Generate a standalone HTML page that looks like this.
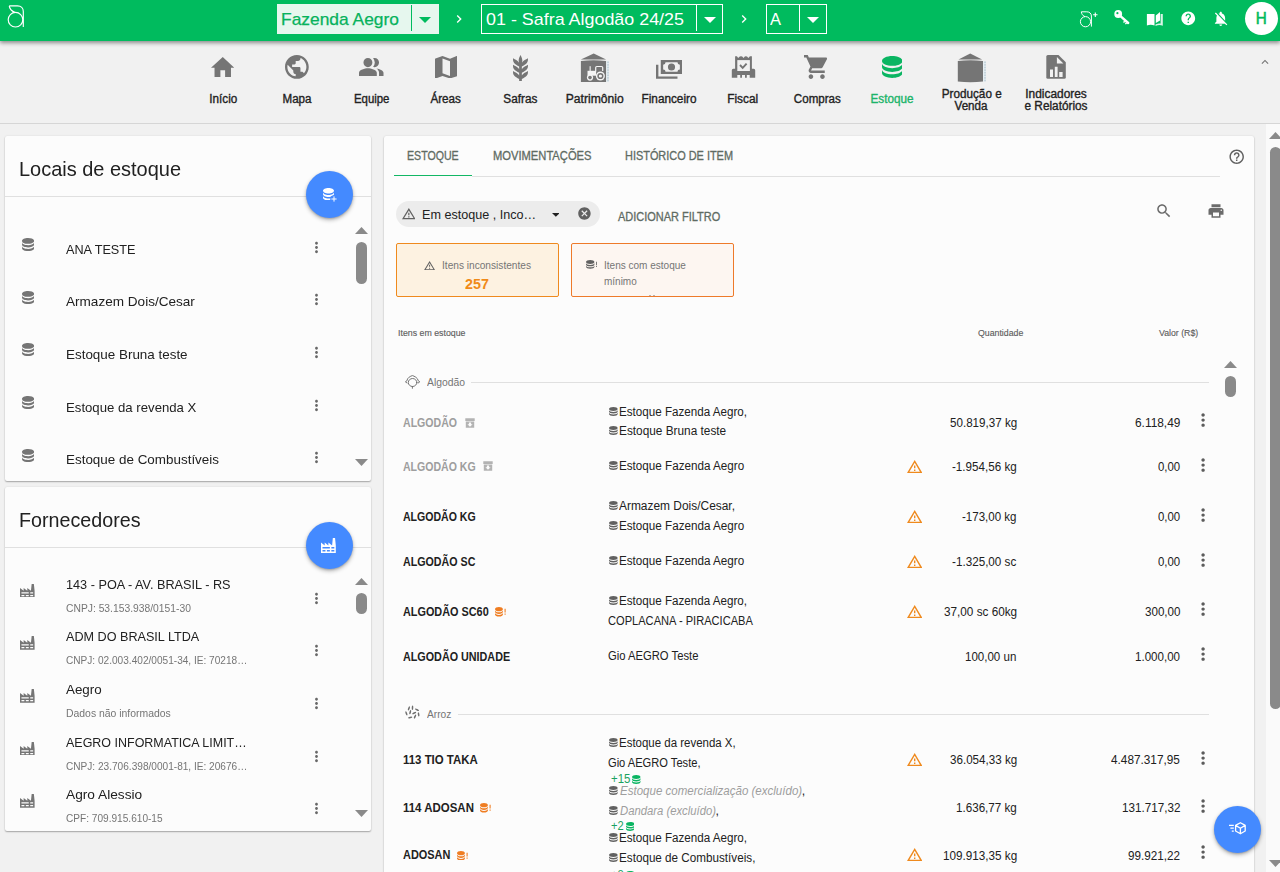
<!DOCTYPE html>
<html lang="pt-BR"><head><meta charset="utf-8"><title>Estoque - Aegro</title>
<style>
html,body{margin:0;padding:0;}
body{width:1280px;height:872px;overflow:hidden;position:relative;background:#f1f1f1;font-family:"Liberation Sans",sans-serif;}
.t{position:absolute;white-space:pre;}
</style></head><body>
<div style="position:absolute;left:0px;top:41px;width:1280px;height:82px;background:#f1f1f1;"></div>
<div style="position:absolute;left:0px;top:123px;width:1280px;height:1px;background:#d6d6d6;"></div>
<div style="position:absolute;left:0px;top:0px;width:1280px;height:41px;background:#00bb5e;box-shadow:0 1.500px 4px rgba(0,0,0,.42);"></div>
<svg style="position:absolute;left:0px;top:0px;" width="32" height="32" viewBox="0 0 32 32"><g fill="none" stroke="#fff" stroke-width="1.150"><circle cx="15.500" cy="19.700" r="7.300"/><path d="M9.300 5.900H17.500C21 5.900 23.300 8.300 23.300 11.500V27"/><path d="M9.300 5.900C9.500 9 11.500 11 14.800 12.300"/></g></svg>
<div style="position:absolute;left:277px;top:4px;width:162px;height:30px;background:#e6f7ee;"></div>
<div class="t" style="left:281.00px;top:10.34px;font-size:17px;line-height:19.533px;color:#06b25c;transform:scaleX(1.0233);transform-origin:0 0;-webkit-text-stroke:0.25px #06b25c;">Fazenda Aegro</div>
<div style="position:absolute;left:411px;top:5px;width:1px;height:26px;background:#00bb5e;"></div>
<svg style="position:absolute;left:418.5px;top:16.5px" width="12.0" height="6.0" viewBox="7 10 10 5" preserveAspectRatio="none"><path fill="#00bb5e" d="M7 10l5 5 5-5z"/></svg>
<svg style="position:absolute;left:451.0px;top:10.6px;" width="16" height="16" viewBox="0 0 24 24"><path fill="#fff" d="M10 6L8.590 7.410 13.170 12l-4.580 4.590L10 18l6-6z"/></svg>
<div style="position:absolute;left:481px;top:4px;width:242px;height:30px;border:1px solid #fff;box-sizing:border-box;"></div>
<div class="t" style="left:486.00px;top:10.34px;font-size:17px;line-height:19.533px;color:#fff;transform:scaleX(1.0527);transform-origin:0 0;">01 - Safra Algodão 24/25</div>
<div style="position:absolute;left:696px;top:5px;width:1px;height:26px;background:#fff;"></div>
<svg style="position:absolute;left:703.5px;top:16.5px" width="12.0" height="6.0" viewBox="7 10 10 5" preserveAspectRatio="none"><path fill="#fff" d="M7 10l5 5 5-5z"/></svg>
<svg style="position:absolute;left:736.0px;top:10.6px;" width="16" height="16" viewBox="0 0 24 24"><path fill="#fff" d="M10 6L8.590 7.410 13.170 12l-4.580 4.590L10 18l6-6z"/></svg>
<div style="position:absolute;left:766px;top:4px;width:61px;height:30px;border:1px solid #fff;box-sizing:border-box;"></div>
<div class="t" style="left:770.00px;top:10.34px;font-size:17px;line-height:19.533px;color:#fff;transform:scaleX(0.9697);transform-origin:0 0;">A</div>
<div style="position:absolute;left:799px;top:5px;width:1px;height:26px;background:#fff;"></div>
<svg style="position:absolute;left:806.5px;top:16.5px" width="12.0" height="6.0" viewBox="7 10 10 5" preserveAspectRatio="none"><path fill="#fff" d="M7 10l5 5 5-5z"/></svg>
<svg style="position:absolute;left:1078px;top:9px;" width="22" height="20" viewBox="0 0 22 20"><g fill="none" stroke="#fff" stroke-width="1"><circle cx="7.500" cy="12.700" r="5.100"/><path d="M3.300 2.800H8.800C11.600 2.800 13.400 4.600 13.400 7V17.600"/><path d="M3.300 2.800C3.500 5 4.800 6.700 7 7.700"/><path d="M17.300 3.500v4.400M15.100 5.700h4.400" stroke-width="1.100"/></g></svg>
<svg style="position:absolute;left:1113px;top:9px;" width="18" height="18" viewBox="0 0 18 18"><circle cx="5.200" cy="5" r="3.900" fill="#fff"/><path d="M7.500 7.200L15.200 14" stroke="#fff" stroke-width="2.400" stroke-linecap="round"/><path d="M11.800 12.200l-1.300 1.400M13.600 13.800l-1.200 1.300" stroke="#fff" stroke-width="1.400"/><circle cx="4.400" cy="4.200" r="1.100" fill="#00bb5e"/></svg>
<svg style="position:absolute;left:1146px;top:11px;" width="18" height="16" viewBox="0 0 18 16"><g fill="#fff"><path d="M0.900 3H8.500V14.500C6 13.600 3.400 13.600 0.900 14.500z"/><path d="M9.800 4.500L14 1V9.500L9.800 12z"/><path opacity=".85" d="M14.600 3H16.800V14.700C14.300 13.700 12 13.900 9.500 14.900V13.400C11.600 12.500 13.500 12.300 14.600 12.500z"/></g></svg>
<svg style="position:absolute;left:1179.75px;top:10.25px;" width="16.5" height="16.5" viewBox="0 0 24 24"><path fill="#fff" d="M12 2C6.480 2 2 6.480 2 12s4.480 10 10 10 10-4.480 10-10S17.520 2 12 2zm1 17h-2v-2h2v2zm2.070-7.750l-.9.92C13.450 12.900 13 13.500 13 15h-2v-.5c0-1.100.45-2.100 1.170-2.830l1.240-1.260c.37-.36.59-.86.59-1.410 0-1.100-.9-2-2-2s-2 .9-2 2H8c0-2.210 1.790-4 4-4s4 1.790 4 4c0 .88-.36 1.680-.93 2.250z"/></svg>
<svg style="position:absolute;left:1212.25px;top:9.75px;" width="17.5" height="17.5" viewBox="0 0 24 24"><path fill="#fff" d="M20 18.690L7.840 6.140 5.270 3.490 4 4.760l2.800 2.800v.01c-.52.99-.8 2.160-.8 3.420v5l-2 2v1h13.730l2 2L21 19.720l-1-1.030zM12 22c1.110 0 2-.89 2-2h-4c0 1.110.89 2 2 2zm6-7.320V11c0-3.080-1.640-5.640-4.500-6.320V4c0-.83-.67-1.500-1.500-1.500s-1.500.67-1.500 1.500v.68c-.15.03-.29.08-.42.12-.1.03-.2.07-.3.11h-.01c-.01 0-.01 0-.02.01-.23.09-.46.2-.68.31 0 0-.01 0-.01.01L18 14.680z"/></svg>
<div style="position:absolute;left:1245px;top:2px;width:33px;height:33px;background:#fff;border-radius:50%;"></div>
<div class="t" style="left:1255.36px;top:9.34px;font-size:17px;line-height:19.533px;color:#00bb5e;transform:scaleX(0.8957);transform-origin:50% 0;-webkit-text-stroke:0.6px #00bb5e;">H</div>
<svg style="position:absolute;left:210.75px;top:56.5px" width="23.5" height="20.5" viewBox="2 3 20 17" preserveAspectRatio="none"><path fill="#757575" d="M10 20v-6h4v6h5v-8h3L12 3 2 12h3v8z"/></svg>
<div class="t" style="left:208.56px;top:93.15px;font-size:12px;line-height:13.788px;color:#222;transform:scaleX(0.9760);transform-origin:50% 0;-webkit-text-stroke:0.35px #222;">Início</div>
<svg style="position:absolute;left:285px;top:55px" width="23.75" height="23.75" viewBox="2 2 20 20" preserveAspectRatio="none"><path fill="#757575" d="M12 2C6.48 2 2 6.48 2 12s4.48 10 10 10 10-4.48 10-10S17.52 2 12 2zm-1 17.93c-3.95-.49-7-3.85-7-7.930 0-.62.08-1.210.21-1.790L9 15v1c0 1.100.9 2 2 2v1.930zm6.900-2.540c-.26-.81-1-1.390-1.900-1.390h-1v-3c0-.55-.45-1-1-1H8v-2h2c.55 0 1-.45 1-1V7h2c1.100 0 2-.9 2-2v-.41c2.930 1.190 5 4.060 5 7.410 0 2.080-.8 3.970-2.100 5.390z"/></svg>
<div class="t" style="left:282.08px;top:93.15px;font-size:12px;line-height:13.788px;color:#222;transform:scaleX(0.9657);transform-origin:50% 0;-webkit-text-stroke:0.35px #222;">Mapa</div>
<svg style="position:absolute;left:359.25px;top:57.5px" width="24.5" height="18.25" viewBox="1 4 22 16" preserveAspectRatio="none"><path fill="#757575" d="M16.670 13.130C18.040 14.060 19 15.320 19 17v3h4v-3c0-2.180-3.570-3.470-6.330-3.870zM9 4a4 4 0 1 0 0 8 4 4 0 0 0 0-8zM15 12c2.210 0 4-1.790 4-4s-1.790-4-4-4c-.47 0-.91.1-1.330.24a5.980 5.980 0 0 1 0 7.520c.42.14.86.24 1.330.24zM9 13c-2.670 0-8 1.340-8 4v3h16v-3c0-2.660-5.330-4-8-4z"/></svg>
<div class="t" style="left:352.81px;top:93.15px;font-size:12px;line-height:13.788px;color:#222;transform:scaleX(0.9498);transform-origin:50% 0;-webkit-text-stroke:0.35px #222;">Equipe</div>
<svg style="position:absolute;left:434.5px;top:55.75px" width="22.5" height="22.5" viewBox="3 3 18 18" preserveAspectRatio="none"><path fill="#757575" d="M20.500 3l-.16.03L15 5.100 9 3 3.360 4.900c-.21.07-.36.25-.36.48V20.500c0 .28.22.5.5.5l.16-.03L9 18.900l6 2.100 5.640-1.900c.21-.07.36-.25.36-.48V3.500c0-.28-.22-.5-.5-.5zM15 19l-6-2.110V5l6 2.110V19z"/></svg>
<div class="t" style="left:430.07px;top:93.15px;font-size:12px;line-height:13.788px;color:#222;transform:scaleX(0.9726);transform-origin:50% 0;-webkit-text-stroke:0.35px #222;">Áreas</div>
<svg style="position:absolute;left:512.5px;top:54.5px" width="15.0" height="26.25" viewBox="6.5 1.21 11.0 21.79" preserveAspectRatio="none"><path fill="#757575" d="M7.330,18.330C6.500,17.170 6.500,15.830 6.500,14.500C8.170,15.500 9.830,16.500 10.670,17.670L11,18.230V15.950C9.500,15.050 8.080,14.130 7.330,13.080C6.500,11.920 6.500,10.580 6.500,9.250C8.170,10.250 9.830,11.250 10.670,12.420L11,12.980V10.700C9.500,9.800 8.080,8.880 7.330,7.830C6.500,6.670 6.500,5.330 6.500,4C8.170,5 9.830,6 10.670,7.170C10.770,7.310 10.860,7.460 10.940,7.620C10.770,7 10.660,6.420 10.650,5.820C10.640,4.310 11.300,2.760 11.960,1.210C12.650,2.690 13.340,4.180 13.350,5.690C13.360,6.320 13.250,6.960 13.070,7.590C13.150,7.450 13.230,7.310 13.330,7.170C14.170,6 15.830,5 17.500,4C17.500,5.330 17.500,6.670 16.670,7.830C15.920,8.880 14.500,9.800 13,10.700V12.980L13.330,12.420C14.170,11.250 15.830,10.250 17.500,9.250C17.500,10.580 17.500,11.920 16.670,13.080C15.920,14.130 14.500,15.050 13,15.950V18.230L13.330,17.670C14.170,16.500 15.830,15.500 17.500,14.500C17.500,15.830 17.500,17.170 16.670,18.330C15.920,19.380 14.500,20.300 13,21.200V23H11V21.200C9.500,20.300 8.080,19.380 7.330,18.330Z"/></svg>
<div class="t" style="left:502.91px;top:93.15px;font-size:12px;line-height:13.788px;color:#222;transform:scaleX(0.9802);transform-origin:50% 0;-webkit-text-stroke:0.35px #222;">Safras</div>
<svg style="position:absolute;left:580px;top:53px;" width="30" height="30" viewBox="0 0 30 30"><path fill="#757575" d="M0.900 6.500L13.700 0.600 26.100 6.500z"/><path fill="#757575" d="M0.900 8.100C9 7 18 7 26.100 8.100V29H0.900z"/><rect x="26.300" y="8.300" width="2.700" height="20.500" fill="#e3eef3"/><path d="M28 8.500v20" stroke="#9fb0ba" stroke-width=".8" stroke-dasharray="1.600 1"/><g fill="#f4f4f4"><rect x="9.600" y="13.200" width="1.100" height="4.800"/><rect x="7.500" y="17.800" width="8.600" height="4.900"/><circle cx="20.400" cy="23" r="4.500"/><circle cx="10" cy="24.600" r="3.100"/></g><path d="M15.700 18.500V14.600Q15.700 13.500 16.800 13.500H21.600Q22.700 13.500 22.700 14.600V18" fill="none" stroke="#f4f4f4" stroke-width="1.200"/><circle cx="20.400" cy="23" r="3.100" fill="#757575"/><circle cx="20.400" cy="23" r="1.600" fill="#f4f4f4"/><circle cx="10" cy="24.600" r="1.800" fill="#757575"/></svg>
<div class="t" style="left:566.07px;top:93.15px;font-size:12px;line-height:13.788px;color:#222;transform:scaleX(1.0112);transform-origin:50% 0;-webkit-text-stroke:0.35px #222;">Patrimônio</div>
<svg style="position:absolute;left:655.75px;top:60px" width="26.25" height="18.75" viewBox="1 6 22 16" preserveAspectRatio="none"><path fill="#757575" d="M5,6H23V18H5V6M14,9A3,3 0 0,1 17,12A3,3 0 0,1 14,15A3,3 0 0,1 11,12A3,3 0 0,1 14,9M9,8A2,2 0 0,1 7,10V14A2,2 0 0,1 9,16H19A2,2 0 0,1 21,14V10A2,2 0 0,1 19,8H9M1,10H3V20H19V22H1V10Z"/></svg>
<div class="t" style="left:640.88px;top:93.15px;font-size:12px;line-height:13.788px;color:#222;transform:scaleX(0.9816);transform-origin:50% 0;-webkit-text-stroke:0.35px #222;">Financeiro</div>
<svg style="position:absolute;left:731px;top:55px;" width="25" height="24" viewBox="0 0 25 24"><path fill="#757575" d="M4.100 14V1.200H5.900L7.200 3 8.800 1.400Q10 0.900 11.200 1.400L12.500 3 13.800 1.400Q14.800 0.900 16 1.400L17.400 3 18.900 1.200H20.900V14z"/><path fill="#757575" d="M0.800 22.700V15.200Q0.800 13.700 2.300 13.700H22.700Q24.200 13.700 24.200 15.200V22.700H18.700V20H6.300V22.700zM9.200 20h1.800v2.700H9.200zM14 20h1.800v2.700H14z"/><rect x="6.300" y="5.100" width="12.600" height="10.900" fill="#f1f1f1"/><path d="M9 10L11.700 12.900 15.600 8.600" stroke="#757575" stroke-width="1.900" fill="none"/></svg>
<div class="t" style="left:727.33px;top:93.15px;font-size:12px;line-height:13.788px;color:#222;transform:scaleX(0.9890);transform-origin:50% 0;-webkit-text-stroke:0.35px #222;">Fiscal</div>
<svg style="position:absolute;left:804.25px;top:55px" width="24.0" height="24" viewBox="1 2 20.81 20" preserveAspectRatio="none"><path fill="#757575" d="M7 18c-1.100 0-1.990.9-1.990 2S5.900 22 7 22s2-.9 2-2-.9-2-2-2zM1 2v2h2l3.600 7.590-1.350 2.450c-.16.28-.25.61-.25.96 0 1.100.9 2 2 2h12v-2H7.420c-.14 0-.25-.11-.25-.25l.03-.12.9-1.630h7.450c.75 0 1.410-.41 1.750-1.030l3.580-6.490c.08-.14.12-.31.12-.48 0-.55-.45-1-1-1H5.210l-.94-2H1zm16 16c-1.100 0-1.990.9-1.990 2s.89 2 1.990 2 2-.9 2-2-.9-2-2-2z"/></svg>
<div class="t" style="left:793.41px;top:93.15px;font-size:12px;line-height:13.788px;color:#222;transform:scaleX(0.9653);transform-origin:50% 0;-webkit-text-stroke:0.35px #222;">Compras</div>
<svg style="position:absolute;left:881.75px;top:55.75px" width="20.5" height="22.0" viewBox="4 3 16 18" preserveAspectRatio="none"><path fill="#0ab562" d="M12,3C7.580,3 4,4.790 4,7C4,9.210 7.580,11 12,11C16.420,11 20,9.210 20,7C20,4.790 16.420,3 12,3M4,9V12C4,14.210 7.580,16 12,16C16.420,16 20,14.210 20,12V9C20,11.210 16.420,13 12,13C7.580,13 4,11.210 4,9M4,14V17C4,19.210 7.580,21 12,21C16.420,21 20,19.210 20,17V14C20,16.210 16.420,18 12,18C7.580,18 4,16.210 4,14Z"/></svg>
<div class="t" style="left:870.23px;top:93.15px;font-size:12px;line-height:13.788px;color:#1cb46a;transform:scaleX(0.9762);transform-origin:50% 0;-webkit-text-stroke:0.35px #1cb46a;">Estoque</div>
<svg style="position:absolute;left:956px;top:53px;" width="32" height="30" viewBox="0 0 32 30"><path fill="#757575" d="M2.500 6.500L14.200 0.600 26.100 6.500z"/><path fill="#757575" d="M1.800 8.100C10 7 19 7 27 8.100V28.600C19 29.400 10 29.400 1.800 28.600z"/><rect x="27.200" y="8.300" width="2.800" height="20.200" fill="#e3eef3"/><path d="M29 8.500v20" stroke="#9fb0ba" stroke-width=".8" stroke-dasharray="1.600 1"/></svg>
<div class="t" style="left:940.80px;top:87.65px;font-size:12px;line-height:13.788px;color:#222;transform:scaleX(0.9773);transform-origin:50% 0;-webkit-text-stroke:0.35px #222;">Produção e</div>
<div class="t" style="left:954.48px;top:100.15px;font-size:12px;line-height:13.788px;color:#222;transform:scaleX(0.9693);transform-origin:50% 0;-webkit-text-stroke:0.35px #222;">Venda</div>
<svg style="position:absolute;left:1046px;top:54px;" width="21" height="26" viewBox="0 0 21 26"><path fill="#757575" d="M1.800 0.900H12.500L19.800 8.200V23.200Q19.800 24.700 18.300 24.700H1.800Q0.300 24.700 0.300 23.200V2.400Q0.300 0.900 1.800 0.900z"/><path fill="#f1f1f1" d="M10.900 2.900V9.400H17.400zM4 15.600h3v7.300H4zM8.800 12.800h2.800v10.100H8.800zM13.200 17.900h3.400v5h-3.400z"/></svg>
<div class="t" style="left:1025.23px;top:87.65px;font-size:12px;line-height:13.788px;color:#222;transform:scaleX(0.9912);transform-origin:50% 0;-webkit-text-stroke:0.35px #222;">Indicadores</div>
<div class="t" style="left:1023.98px;top:100.15px;font-size:12px;line-height:13.788px;color:#222;transform:scaleX(0.9839);transform-origin:50% 0;-webkit-text-stroke:0.35px #222;">e Relatórios</div>
<svg style="position:absolute;left:1258.0px;top:54.5px;" width="14" height="14" viewBox="0 0 24 24"><path fill="#757575" d="M12 8l-6 6 1.410 1.410L12 10.830l4.590 4.580L18 14z"/></svg>
<div style="position:absolute;left:0;top:0;width:380px;height:872px;will-change:transform">
<div style="position:absolute;left:5px;top:136px;width:366px;height:345px;background:#fcfcfc;border-radius:2px;box-shadow:0 1px 1.500px rgba(0,0,0,.3),0 0 2px rgba(0,0,0,.1);"></div>
<div class="t" style="left:18.90px;top:157.32px;font-size:20.5px;line-height:23.555px;color:#212121;transform:scaleX(0.9735);transform-origin:0 0;">Locais de estoque</div>
<div style="position:absolute;left:5px;top:196px;width:366px;height:1px;background:#e0e0e0;"></div>
<div style="position:absolute;left:305.5px;top:171.0px;width:47px;height:47px;background:#448aff;border-radius:50%;box-shadow:0 2px 4px rgba(0,0,0,.28),0 1px 2px rgba(0,0,0,.16);"></div>
<svg style="position:absolute;left:322.5px;top:187.5px" width="11.0" height="12.5" viewBox="4 3 16 18" preserveAspectRatio="none"><path fill="#fff" d="M12,3C7.580,3 4,4.790 4,7C4,9.210 7.580,11 12,11C16.420,11 20,9.210 20,7C20,4.790 16.420,3 12,3M4,9V12C4,14.210 7.580,16 12,16C16.420,16 20,14.210 20,12V9C20,11.210 16.420,13 12,13C7.580,13 4,11.210 4,9M4,14V17C4,19.210 7.580,21 12,21C16.420,21 20,19.210 20,17V14C20,16.210 16.420,18 12,18C7.580,18 4,16.210 4,14Z"/></svg>
<svg style="position:absolute;left:329.500px;top:194.700px" width="8" height="8" viewBox="0 0 8 8"><circle cx="4" cy="4" r="3.800" fill="#448aff"/><path d="M4 1.400v5.200M1.400 4h5.200" stroke="#fff" stroke-width="1"/></svg>
<svg style="position:absolute;left:355px;top:227px" width="13" height="7" viewBox="0 0 13 7"><path fill="#8a8a8a" d="M0 7L6.500 0 13 7z"/></svg>
<div style="position:absolute;left:356px;top:242px;width:11px;height:41.5px;background:#8a8a8a;border-radius:5.500px;"></div>
<svg style="position:absolute;left:355px;top:458.8px" width="13" height="7" viewBox="0 0 13 7"><path fill="#8a8a8a" d="M0 0L6.500 7 13 0z"/></svg>
<svg style="position:absolute;left:21.9px;top:238.29999999999998px" width="12.200000000000003" height="13.099999999999994" viewBox="4 3 16 18" preserveAspectRatio="none"><path fill="#757575" d="M12,3C7.580,3 4,4.790 4,7C4,9.210 7.580,11 12,11C16.420,11 20,9.210 20,7C20,4.790 16.420,3 12,3M4,9V12C4,14.210 7.580,16 12,16C16.420,16 20,14.210 20,12V9C20,11.210 16.420,13 12,13C7.580,13 4,11.210 4,9M4,14V17C4,19.210 7.580,21 12,21C16.420,21 20,19.210 20,17V14C20,16.210 16.420,18 12,18C7.580,18 4,16.210 4,14Z"/></svg>
<div class="t" style="left:65.50px;top:241.77px;font-size:13.5px;line-height:15.511px;color:#212121;transform:scaleX(0.9388);transform-origin:0 0;">ANA TESTE</div>
<svg style="position:absolute;left:307.8px;top:238.8px;" width="17" height="17" viewBox="0 0 24 24"><path fill="#686868" d="M12 8c1.100 0 2-.9 2-2s-.9-2-2-2-2 .9-2 2 .9 2 2 2zm0 2c-1.100 0-2 .9-2 2s.9 2 2 2 2-.9 2-2-.9-2-2-2zm0 6c-1.100 0-2 .9-2 2s.9 2 2 2 2-.9 2-2-.9-2-2-2z"/></svg>
<svg style="position:absolute;left:21.9px;top:290.7px" width="12.200000000000003" height="13.099999999999966" viewBox="4 3 16 18" preserveAspectRatio="none"><path fill="#757575" d="M12,3C7.580,3 4,4.790 4,7C4,9.210 7.580,11 12,11C16.420,11 20,9.210 20,7C20,4.790 16.420,3 12,3M4,9V12C4,14.210 7.580,16 12,16C16.420,16 20,14.210 20,12V9C20,11.210 16.420,13 12,13C7.580,13 4,11.210 4,9M4,14V17C4,19.210 7.580,21 12,21C16.420,21 20,19.210 20,17V14C20,16.210 16.420,18 12,18C7.580,18 4,16.210 4,14Z"/></svg>
<div class="t" style="left:65.50px;top:294.17px;font-size:13.5px;line-height:15.511px;color:#212121;transform:scaleX(1.0048);transform-origin:0 0;">Armazem Dois/Cesar</div>
<svg style="position:absolute;left:307.8px;top:291.2px;" width="17" height="17" viewBox="0 0 24 24"><path fill="#686868" d="M12 8c1.100 0 2-.9 2-2s-.9-2-2-2-2 .9-2 2 .9 2 2 2zm0 2c-1.100 0-2 .9-2 2s.9 2 2 2 2-.9 2-2-.9-2-2-2zm0 6c-1.100 0-2 .9-2 2s.9 2 2 2 2-.9 2-2-.9-2-2-2z"/></svg>
<svg style="position:absolute;left:21.9px;top:343.1px" width="12.200000000000003" height="13.099999999999966" viewBox="4 3 16 18" preserveAspectRatio="none"><path fill="#757575" d="M12,3C7.580,3 4,4.790 4,7C4,9.210 7.580,11 12,11C16.420,11 20,9.210 20,7C20,4.790 16.420,3 12,3M4,9V12C4,14.210 7.580,16 12,16C16.420,16 20,14.210 20,12V9C20,11.210 16.420,13 12,13C7.580,13 4,11.210 4,9M4,14V17C4,19.210 7.580,21 12,21C16.420,21 20,19.210 20,17V14C20,16.210 16.420,18 12,18C7.580,18 4,16.210 4,14Z"/></svg>
<div class="t" style="left:65.50px;top:346.57px;font-size:13.5px;line-height:15.511px;color:#212121;transform:scaleX(0.9939);transform-origin:0 0;">Estoque Bruna teste</div>
<svg style="position:absolute;left:307.8px;top:343.6px;" width="17" height="17" viewBox="0 0 24 24"><path fill="#686868" d="M12 8c1.100 0 2-.9 2-2s-.9-2-2-2-2 .9-2 2 .9 2 2 2zm0 2c-1.100 0-2 .9-2 2s.9 2 2 2 2-.9 2-2-.9-2-2-2zm0 6c-1.100 0-2 .9-2 2s.9 2 2 2 2-.9 2-2-.9-2-2-2z"/></svg>
<svg style="position:absolute;left:21.9px;top:396.4px" width="12.200000000000003" height="13.099999999999966" viewBox="4 3 16 18" preserveAspectRatio="none"><path fill="#757575" d="M12,3C7.580,3 4,4.790 4,7C4,9.210 7.580,11 12,11C16.420,11 20,9.210 20,7C20,4.790 16.420,3 12,3M4,9V12C4,14.210 7.580,16 12,16C16.420,16 20,14.210 20,12V9C20,11.210 16.420,13 12,13C7.580,13 4,11.210 4,9M4,14V17C4,19.210 7.580,21 12,21C16.420,21 20,19.210 20,17V14C20,16.210 16.420,18 12,18C7.580,18 4,16.210 4,14Z"/></svg>
<div class="t" style="left:65.50px;top:399.87px;font-size:13.5px;line-height:15.511px;color:#212121;transform:scaleX(0.9760);transform-origin:0 0;">Estoque da revenda X</div>
<svg style="position:absolute;left:307.8px;top:396.9px;" width="17" height="17" viewBox="0 0 24 24"><path fill="#686868" d="M12 8c1.100 0 2-.9 2-2s-.9-2-2-2-2 .9-2 2 .9 2 2 2zm0 2c-1.100 0-2 .9-2 2s.9 2 2 2 2-.9 2-2-.9-2-2-2zm0 6c-1.100 0-2 .9-2 2s.9 2 2 2 2-.9 2-2-.9-2-2-2z"/></svg>
<svg style="position:absolute;left:21.9px;top:448.79999999999995px" width="12.200000000000003" height="13.099999999999966" viewBox="4 3 16 18" preserveAspectRatio="none"><path fill="#757575" d="M12,3C7.580,3 4,4.790 4,7C4,9.210 7.580,11 12,11C16.420,11 20,9.210 20,7C20,4.790 16.420,3 12,3M4,9V12C4,14.210 7.580,16 12,16C16.420,16 20,14.210 20,12V9C20,11.210 16.420,13 12,13C7.580,13 4,11.210 4,9M4,14V17C4,19.210 7.580,21 12,21C16.420,21 20,19.210 20,17V14C20,16.210 16.420,18 12,18C7.580,18 4,16.210 4,14Z"/></svg>
<div class="t" style="left:65.50px;top:452.27px;font-size:13.5px;line-height:15.511px;color:#212121;transform:scaleX(0.9945);transform-origin:0 0;">Estoque de Combustíveis</div>
<svg style="position:absolute;left:307.8px;top:449.3px;" width="17" height="17" viewBox="0 0 24 24"><path fill="#686868" d="M12 8c1.100 0 2-.9 2-2s-.9-2-2-2-2 .9-2 2 .9 2 2 2zm0 2c-1.100 0-2 .9-2 2s.9 2 2 2 2-.9 2-2-.9-2-2-2zm0 6c-1.100 0-2 .9-2 2s.9 2 2 2 2-.9 2-2-.9-2-2-2z"/></svg>
<div style="position:absolute;left:5px;top:487px;width:366px;height:343.5px;background:#fcfcfc;border-radius:2px;box-shadow:0 1px 1.500px rgba(0,0,0,.3),0 0 2px rgba(0,0,0,.1);"></div>
<div class="t" style="left:18.90px;top:508.32px;font-size:20.5px;line-height:23.555px;color:#212121;transform:scaleX(0.9614);transform-origin:0 0;">Fornecedores</div>
<div style="position:absolute;left:5px;top:547px;width:366px;height:1px;background:#e0e0e0;"></div>
<div style="position:absolute;left:305.5px;top:522.0px;width:47px;height:47px;background:#448aff;border-radius:50%;box-shadow:0 2px 4px rgba(0,0,0,.28),0 1px 2px rgba(0,0,0,.16);"></div>
<svg style="position:absolute;left:321px;top:538px" width="14.800000000000011" height="14.899999999999977" viewBox="2 2 20 20" preserveAspectRatio="none"><path fill="#fff" d="M4,18V20H8V18H4M4,14V16H14V14H4M10,18V20H14V18H10M16,14V16H20V14H16M16,18V20H20V18H16M2,22V8L7,12V8L12,12V8L17,12L18,2H21L22,12V22H2Z"/></svg>
<svg style="position:absolute;left:355px;top:578.4px" width="13" height="7" viewBox="0 0 13 7"><path fill="#8a8a8a" d="M0 7L6.500 0 13 7z"/></svg>
<div style="position:absolute;left:356px;top:593.3px;width:11px;height:21.0px;background:#8a8a8a;border-radius:5.500px;"></div>
<svg style="position:absolute;left:355px;top:810px" width="13" height="7" viewBox="0 0 13 7"><path fill="#8a8a8a" d="M0 0L6.500 7 13 0z"/></svg>
<svg style="position:absolute;left:20.1px;top:583.6px" width="14.600000000000001" height="13.700000000000045" viewBox="2 2 20 20" preserveAspectRatio="none"><path fill="#757575" d="M4,18V20H8V18H4M4,14V16H14V14H4M10,18V20H14V18H10M16,14V16H20V14H16M16,18V20H20V18H16M2,22V8L7,12V8L12,12V8L17,12L18,2H21L22,12V22H2Z"/></svg>
<div class="t" style="left:65.50px;top:576.67px;font-size:13.5px;line-height:15.511px;color:#212121;transform:scaleX(0.9396);transform-origin:0 0;">143 - POA - AV. BRASIL - RS</div>
<div class="t" style="left:65.50px;top:602.71px;font-size:10.2px;line-height:11.72px;color:#757575;transform:scaleX(1.0116);transform-origin:0 0;">CNPJ: 53.153.938/0151-30</div>
<svg style="position:absolute;left:307.8px;top:589.7px;" width="17" height="17" viewBox="0 0 24 24"><path fill="#686868" d="M12 8c1.100 0 2-.9 2-2s-.9-2-2-2-2 .9-2 2 .9 2 2 2zm0 2c-1.100 0-2 .9-2 2s.9 2 2 2 2-.9 2-2-.9-2-2-2zm0 6c-1.100 0-2 .9-2 2s.9 2 2 2 2-.9 2-2-.9-2-2-2z"/></svg>
<svg style="position:absolute;left:20.1px;top:636.0px" width="14.600000000000001" height="13.700000000000045" viewBox="2 2 20 20" preserveAspectRatio="none"><path fill="#757575" d="M4,18V20H8V18H4M4,14V16H14V14H4M10,18V20H14V18H10M16,14V16H20V14H16M16,18V20H20V18H16M2,22V8L7,12V8L12,12V8L17,12L18,2H21L22,12V22H2Z"/></svg>
<div class="t" style="left:65.50px;top:629.07px;font-size:13.5px;line-height:15.511px;color:#212121;transform:scaleX(0.9345);transform-origin:0 0;">ADM DO BRASIL LTDA</div>
<div class="t" style="left:65.50px;top:655.11px;font-size:10.2px;line-height:11.72px;color:#757575;transform:scaleX(0.9910);transform-origin:0 0;">CNPJ: 02.003.402/0051-34, IE: 70218…</div>
<svg style="position:absolute;left:307.8px;top:642.1px;" width="17" height="17" viewBox="0 0 24 24"><path fill="#686868" d="M12 8c1.100 0 2-.9 2-2s-.9-2-2-2-2 .9-2 2 .9 2 2 2zm0 2c-1.100 0-2 .9-2 2s.9 2 2 2 2-.9 2-2-.9-2-2-2zm0 6c-1.100 0-2 .9-2 2s.9 2 2 2 2-.9 2-2-.9-2-2-2z"/></svg>
<svg style="position:absolute;left:20.1px;top:689.3px" width="14.600000000000001" height="13.700000000000045" viewBox="2 2 20 20" preserveAspectRatio="none"><path fill="#757575" d="M4,18V20H8V18H4M4,14V16H14V14H4M10,18V20H14V18H10M16,14V16H20V14H16M16,18V20H20V18H16M2,22V8L7,12V8L12,12V8L17,12L18,2H21L22,12V22H2Z"/></svg>
<div class="t" style="left:65.50px;top:682.37px;font-size:13.5px;line-height:15.511px;color:#212121;transform:scaleX(0.9908);transform-origin:0 0;">Aegro</div>
<div class="t" style="left:65.50px;top:708.41px;font-size:10.2px;line-height:11.72px;color:#757575;transform:scaleX(1.0223);transform-origin:0 0;">Dados não informados</div>
<svg style="position:absolute;left:307.8px;top:695.4px;" width="17" height="17" viewBox="0 0 24 24"><path fill="#686868" d="M12 8c1.100 0 2-.9 2-2s-.9-2-2-2-2 .9-2 2 .9 2 2 2zm0 2c-1.100 0-2 .9-2 2s.9 2 2 2 2-.9 2-2-.9-2-2-2zm0 6c-1.100 0-2 .9-2 2s.9 2 2 2 2-.9 2-2-.9-2-2-2z"/></svg>
<svg style="position:absolute;left:20.1px;top:741.8px" width="14.600000000000001" height="13.700000000000045" viewBox="2 2 20 20" preserveAspectRatio="none"><path fill="#757575" d="M4,18V20H8V18H4M4,14V16H14V14H4M10,18V20H14V18H10M16,14V16H20V14H16M16,18V20H20V18H16M2,22V8L7,12V8L12,12V8L17,12L18,2H21L22,12V22H2Z"/></svg>
<div class="t" style="left:65.50px;top:734.87px;font-size:13.5px;line-height:15.511px;color:#212121;transform:scaleX(0.9242);transform-origin:0 0;">AEGRO INFORMATICA LIMIT…</div>
<div class="t" style="left:65.50px;top:760.91px;font-size:10.2px;line-height:11.72px;color:#757575;transform:scaleX(0.9910);transform-origin:0 0;">CNPJ: 23.706.398/0001-81, IE: 20676…</div>
<svg style="position:absolute;left:307.8px;top:747.9px;" width="17" height="17" viewBox="0 0 24 24"><path fill="#686868" d="M12 8c1.100 0 2-.9 2-2s-.9-2-2-2-2 .9-2 2 .9 2 2 2zm0 2c-1.100 0-2 .9-2 2s.9 2 2 2 2-.9 2-2-.9-2-2-2zm0 6c-1.100 0-2 .9-2 2s.9 2 2 2 2-.9 2-2-.9-2-2-2z"/></svg>
<svg style="position:absolute;left:20.1px;top:794.2px" width="14.600000000000001" height="13.700000000000045" viewBox="2 2 20 20" preserveAspectRatio="none"><path fill="#757575" d="M4,18V20H8V18H4M4,14V16H14V14H4M10,18V20H14V18H10M16,14V16H20V14H16M16,18V20H20V18H16M2,22V8L7,12V8L12,12V8L17,12L18,2H21L22,12V22H2Z"/></svg>
<div class="t" style="left:65.50px;top:787.27px;font-size:13.5px;line-height:15.511px;color:#212121;transform:scaleX(1.0154);transform-origin:0 0;">Agro Alessio</div>
<div class="t" style="left:65.50px;top:813.31px;font-size:10.2px;line-height:11.72px;color:#757575;transform:scaleX(0.9916);transform-origin:0 0;">CPF: 709.915.610-15</div>
<svg style="position:absolute;left:307.8px;top:800.3px;" width="17" height="17" viewBox="0 0 24 24"><path fill="#686868" d="M12 8c1.100 0 2-.9 2-2s-.9-2-2-2-2 .9-2 2 .9 2 2 2zm0 2c-1.100 0-2 .9-2 2s.9 2 2 2 2-.9 2-2-.9-2-2-2zm0 6c-1.100 0-2 .9-2 2s.9 2 2 2 2-.9 2-2-.9-2-2-2z"/></svg>
</div>
<div style="position:absolute;left:384px;top:136px;width:870px;height:760px;background:#fcfcfc;border-radius:2px;box-shadow:0 1px 1.500px rgba(0,0,0,.3),0 0 2px rgba(0,0,0,.1);"></div>
<div class="t" style="left:407.40px;top:150.15px;font-size:12px;line-height:13.788px;color:#5f6b63;transform:scaleX(0.8842);transform-origin:0 0;-webkit-text-stroke:0.3px #5f6b63;">ESTOQUE</div>
<div class="t" style="left:492.50px;top:150.15px;font-size:12px;line-height:13.788px;color:#5f6b63;transform:scaleX(0.9310);transform-origin:0 0;-webkit-text-stroke:0.3px #5f6b63;">MOVIMENTAÇÕES</div>
<div class="t" style="left:625.00px;top:150.15px;font-size:12px;line-height:13.788px;color:#5f6b63;transform:scaleX(0.9101);transform-origin:0 0;-webkit-text-stroke:0.3px #5f6b63;">HISTÓRICO DE ITEM</div>
<div style="position:absolute;left:472px;top:176px;width:748px;height:1px;background:#e0e0e0;"></div>
<div style="position:absolute;left:394px;top:175px;width:78px;height:1.2px;background:#12b765;"></div>
<svg style="position:absolute;left:1227.8px;top:148.3px;" width="17.4" height="17.4" viewBox="0 0 24 24"><path fill="#616161" d="M11 18h2v-2h-2v2zm1-16C6.480 2 2 6.480 2 12s4.480 10 10 10 10-4.480 10-10S17.520 2 12 2zm0 18c-4.410 0-8-3.590-8-8s3.590-8 8-8 8 3.590 8 8-3.590 8-8 8zm0-14c-2.210 0-4 1.790-4 4h2c0-1.100.9-2 2-2s2 .9 2 2c0 2-3 1.750-3 5h2c0-2.250 3-2.500 3-5 0-2.210-1.790-4-4-4z"/></svg>
<div style="position:absolute;left:396px;top:201.3px;width:204px;height:25.7px;background:#ececec;border-radius:13px;"></div>
<svg style="position:absolute;left:401.8px;top:208.3px" width="13.699999999999989" height="11.299999999999983" viewBox="1 2 22 19" preserveAspectRatio="none"><path fill="#616161" d="M12,2L1,21H23M12,6L19.530,19H4.470M11,10V14H13V10M11,16V18H13V16"/></svg>
<div class="t" style="left:421.70px;top:206.77px;font-size:13.5px;line-height:15.511px;color:#212121;transform:scaleX(0.9329);transform-origin:0 0;">Em estoque , Inco…</div>
<svg style="position:absolute;left:551.6px;top:213px" width="7.699999999999932" height="3.8000000000000114" viewBox="7 10 10 5" preserveAspectRatio="none"><path fill="#212121" d="M7 10l5 5 5-5z"/></svg>
<svg style="position:absolute;left:576.75px;top:206.15px;" width="14.9" height="14.9" viewBox="0 0 24 24"><path fill="#616161" d="M12 2C6.470 2 2 6.470 2 12s4.470 10 10 10 10-4.470 10-10S17.530 2 12 2zm5 13.590L15.590 17 12 13.410 8.410 17 7 15.590 10.590 12 7 8.410 8.410 7 12 10.590 15.590 7 17 8.410 13.410 12 17 15.590z"/></svg>
<div class="t" style="left:617.70px;top:210.95px;font-size:12px;line-height:13.788px;color:#5f6b63;transform:scaleX(0.9151);transform-origin:0 0;-webkit-text-stroke:0.3px #5f6b63;">ADICIONAR FILTRO</div>
<svg style="position:absolute;left:1154.6px;top:201.7px;" width="17.8" height="17.8" viewBox="0 0 24 24"><path fill="#6b6b6b" d="M15.500 14h-.79l-.28-.27C15.410 12.590 16 11.110 16 9.500 16 5.910 13.090 3 9.500 3S3 5.910 3 9.500 5.910 16 9.500 16c1.610 0 3.090-.59 4.230-1.570l.27.28v.79l5 4.990L20.490 19l-4.990-5zm-6 0C7.010 14 5 11.990 5 9.500S7.010 5 9.500 5 14 7.010 14 9.500 11.990 14 9.500 14z"/></svg>
<svg style="position:absolute;left:1206.5px;top:201.5px;" width="18" height="18" viewBox="0 0 24 24"><path fill="#6b6b6b" d="M19 8H5c-1.660 0-3 1.340-3 3v6h4v4h12v-4h4v-6c0-1.660-1.340-3-3-3zm-3 11H8v-5h8v5zm3-7c-.55 0-1-.45-1-1s.45-1 1-1 1 .45 1 1-.45 1-1 1zm-1-9H6v4h12V3z"/></svg>
<div style="position:absolute;left:396px;top:243px;width:163px;height:54px;box-sizing:border-box;border:1px solid #ef8a1e;border-radius:2px;background:#fdf2e1;"></div>
<svg style="position:absolute;left:424px;top:260.7px" width="11.199999999999989" height="9.199999999999989" viewBox="1 2 22 19" preserveAspectRatio="none"><path fill="#616161" d="M12,2L1,21H23M12,6L19.530,19H4.470M11,10V14H13V10M11,16V18H13V16"/></svg>
<div class="t" style="left:442.20px;top:259.07px;font-size:11px;line-height:12.639px;color:#757575;transform:scaleX(0.9211);transform-origin:0 0;">Itens inconsistentes</div>
<div class="t" style="left:465.10px;top:274.92px;font-size:15.5px;line-height:17.809px;color:#f08a18;font-weight:700;transform:scaleX(0.9237);transform-origin:0 0;">257</div>
<div style="position:absolute;left:571px;top:243px;width:163px;height:54px;box-sizing:border-box;border:1px solid #ee7a2a;border-radius:2px;background:#fdf6f1;"></div>
<svg style="position:absolute;left:585.7px;top:260.4px" width="11.599999999999909" height="8.800000000000011" viewBox="0 0 22 18" preserveAspectRatio="none"><path fill="#616161" transform="translate(-4,-3)" d="M12,3C7.580,3 4,4.790 4,7C4,9.210 7.580,11 12,11C16.420,11 20,9.210 20,7C20,4.790 16.420,3 12,3M4,9V12C4,14.210 7.580,16 12,16C16.420,16 20,14.210 20,12V9C20,11.210 16.420,13 12,13C7.580,13 4,11.210 4,9M4,14V17C4,19.210 7.580,21 12,21C16.420,21 20,19.210 20,17V14C20,16.210 16.420,18 12,18C7.580,18 4,16.210 4,14Z"/><path fill="#616161" d="M19.300 3.500h2.200v7h-2.200zM19.300 12.300h2.200v2.200h-2.200z"/></svg>
<div class="t" style="left:604.00px;top:259.07px;font-size:11px;line-height:12.639px;color:#757575;transform:scaleX(0.9111);transform-origin:0 0;">Itens com estoque</div>
<div class="t" style="left:604.00px;top:274.87px;font-size:11px;line-height:12.639px;color:#757575;transform:scaleX(0.9068);transform-origin:0 0;">mínimo</div>
<div style="position:absolute;left:649.3px;top:294.6px;width:1.6px;height:1px;background:#b9b4b0;"></div>
<div style="position:absolute;left:653.2px;top:294.6px;width:1.6px;height:1px;background:#b9b4b0;"></div>
<div class="t" style="left:397.60px;top:328.34px;font-size:9.4px;line-height:10.801px;color:#5e5e5e;transform:scaleX(0.9385);transform-origin:0 0;-webkit-text-stroke:0.15px #5e5e5e;">Itens em estoque</div>
<div class="t" style="left:978.40px;top:328.34px;font-size:9.4px;line-height:10.801px;color:#5e5e5e;transform:scaleX(0.9343);transform-origin:0 0;-webkit-text-stroke:0.15px #5e5e5e;">Quantidade</div>
<div class="t" style="left:1158.80px;top:328.34px;font-size:9.4px;line-height:10.801px;color:#5e5e5e;transform:scaleX(0.9326);transform-origin:0 0;-webkit-text-stroke:0.15px #5e5e5e;">Valor (R$)</div>
<svg style="position:absolute;left:1224px;top:360.7px" width="13" height="7" viewBox="0 0 13 7"><path fill="#8a8a8a" d="M0 7L6.500 0 13 7z"/></svg>
<div style="position:absolute;left:1225px;top:375.7px;width:11px;height:21.100000000000023px;background:#8a8a8a;border-radius:5.500px;"></div>
<svg style="position:absolute;left:1224px;top:2000px" width="13" height="7" viewBox="0 0 13 7"><path fill="#8a8a8a" d="M0 0L6.500 7 13 0z"/></svg>
<svg style="position:absolute;left:405px;top:374.500px" width="15.200" height="14" viewBox="0 0 15.200 14"><g fill="none" stroke="#666" stroke-width="0.900" stroke-linejoin="round" stroke-linecap="round"><ellipse cx="7.600" cy="7.500" rx="4.300" ry="4"/><path d="M2 8L0.400 6.800 1.900 5.800C2.200 2.800 5.600 1 7.400 0.600 9.200 1 12.800 2.800 13.300 5.800L14.800 6.800 13.200 8M7.400 11.500V13.300"/></g></svg>
<div class="t" style="left:427.30px;top:375.77px;font-size:11px;line-height:12.639px;color:#757575;transform:scaleX(0.9437);transform-origin:0 0;">Algodão</div>
<div style="position:absolute;left:470.7px;top:382px;width:738.3px;height:1px;background:#e0e0e0;"></div>
<div class="t" style="left:403.20px;top:417.45px;font-size:12px;line-height:13.788px;color:#9e9e9e;font-weight:700;transform:scaleX(0.8819);transform-origin:0 0;">ALGODÃO</div>
<svg style="position:absolute;left:464.5px;top:417.5px" width="10" height="10" viewBox="0 0 10 10"><path fill="#b3b3b3" d="M0.300 0.300h9.400v2.600H0.300zM0.800 3.500h8.400V9.700H0.800z"/><path fill="#fcfcfc" d="M3.900 4.600h2.200v1.600h1.500L5 8.700 2.400 6.200h1.500z"/></svg>
<div class="t" style="left:949.50px;top:415.59px;font-size:12.5px;line-height:14.363px;color:#212121;transform:scaleX(0.9295);transform-origin:0 0;">50.819,37 kg</div>
<div class="t" style="left:1134.80px;top:415.59px;font-size:12.5px;line-height:14.363px;color:#212121;transform:scaleX(0.9511);transform-origin:0 0;">6.118,49</div>
<svg style="position:absolute;left:1193.3px;top:410.4px;" width="20.2" height="20.2" viewBox="0 0 24 24"><path fill="#5c5c5c" d="M12 8c1.100 0 2-.9 2-2s-.9-2-2-2-2 .9-2 2 .9 2 2 2zm0 2c-1.100 0-2 .9-2 2s.9 2 2 2 2-.9 2-2-.9-2-2-2zm0 6c-1.100 0-2 .9-2 2s.9 2 2 2 2-.9 2-2-.9-2-2-2z"/></svg>
<svg style="position:absolute;left:609.3px;top:407.0px" width="8.700000000000045" height="9.0" viewBox="4 3 16 18" preserveAspectRatio="none"><path fill="#616161" d="M12,3C7.580,3 4,4.790 4,7C4,9.210 7.580,11 12,11C16.420,11 20,9.210 20,7C20,4.790 16.420,3 12,3M4,9V12C4,14.210 7.580,16 12,16C16.420,16 20,14.210 20,12V9C20,11.210 16.420,13 12,13C7.580,13 4,11.210 4,9M4,14V17C4,19.210 7.580,21 12,21C16.420,21 20,19.210 20,17V14C20,16.210 16.420,18 12,18C7.580,18 4,16.210 4,14Z"/></svg>
<div class="t" style="left:619.10px;top:405.09px;font-size:12.5px;line-height:14.363px;color:#212121;transform:scaleX(0.9302);transform-origin:0 0;">Estoque Fazenda Aegro,</div>
<svg style="position:absolute;left:609.3px;top:425.79999999999995px" width="8.700000000000045" height="9.0" viewBox="4 3 16 18" preserveAspectRatio="none"><path fill="#616161" d="M12,3C7.580,3 4,4.790 4,7C4,9.210 7.580,11 12,11C16.420,11 20,9.210 20,7C20,4.790 16.420,3 12,3M4,9V12C4,14.210 7.580,16 12,16C16.420,16 20,14.210 20,12V9C20,11.210 16.420,13 12,13C7.580,13 4,11.210 4,9M4,14V17C4,19.210 7.580,21 12,21C16.420,21 20,19.210 20,17V14C20,16.210 16.420,18 12,18C7.580,18 4,16.210 4,14Z"/></svg>
<div class="t" style="left:619.10px;top:423.89px;font-size:12.5px;line-height:14.363px;color:#212121;transform:scaleX(0.9463);transform-origin:0 0;">Estoque Bruna teste</div>
<div class="t" style="left:403.20px;top:461.05px;font-size:12px;line-height:13.788px;color:#9e9e9e;font-weight:700;transform:scaleX(0.8794);transform-origin:0 0;">ALGODÃO KG</div>
<svg style="position:absolute;left:483.1px;top:461.1px" width="10" height="10" viewBox="0 0 10 10"><path fill="#b3b3b3" d="M0.300 0.300h9.400v2.600H0.300zM0.800 3.500h8.400V9.700H0.800z"/><path fill="#fcfcfc" d="M3.900 4.600h2.200v1.600h1.500L5 8.700 2.400 6.200h1.500z"/></svg>
<svg style="position:absolute;left:906.6999999999999px;top:460.0px" width="15.400000000000091" height="13.0" viewBox="1 2 22 19" preserveAspectRatio="none"><path fill="#ef8a1e" d="M12,2L1,21H23M12,6L19.530,19H4.470M11,10V14H13V10M11,16V18H13V16"/></svg>
<div class="t" style="left:952.00px;top:460.19px;font-size:12.5px;line-height:14.363px;color:#212121;transform:scaleX(0.9309);transform-origin:0 0;">-1.954,56 kg</div>
<div class="t" style="left:1158.00px;top:460.19px;font-size:12.5px;line-height:14.363px;color:#212121;transform:scaleX(0.9119);transform-origin:0 0;">0,00</div>
<svg style="position:absolute;left:1193.3px;top:455.2px;" width="20.2" height="20.2" viewBox="0 0 24 24"><path fill="#5c5c5c" d="M12 8c1.100 0 2-.9 2-2s-.9-2-2-2-2 .9-2 2 .9 2 2 2zm0 2c-1.100 0-2 .9-2 2s.9 2 2 2 2-.9 2-2-.9-2-2-2zm0 6c-1.100 0-2 .9-2 2s.9 2 2 2 2-.9 2-2-.9-2-2-2z"/></svg>
<svg style="position:absolute;left:609.3px;top:461.2px" width="8.700000000000045" height="9.0" viewBox="4 3 16 18" preserveAspectRatio="none"><path fill="#616161" d="M12,3C7.580,3 4,4.790 4,7C4,9.210 7.580,11 12,11C16.420,11 20,9.210 20,7C20,4.790 16.420,3 12,3M4,9V12C4,14.210 7.580,16 12,16C16.420,16 20,14.210 20,12V9C20,11.210 16.420,13 12,13C7.580,13 4,11.210 4,9M4,14V17C4,19.210 7.580,21 12,21C16.420,21 20,19.210 20,17V14C20,16.210 16.420,18 12,18C7.580,18 4,16.210 4,14Z"/></svg>
<div class="t" style="left:619.10px;top:459.29px;font-size:12.5px;line-height:14.363px;color:#212121;transform:scaleX(0.9335);transform-origin:0 0;">Estoque Fazenda Aegro</div>
<div class="t" style="left:403.20px;top:510.75px;font-size:12px;line-height:13.788px;color:#212121;font-weight:700;transform:scaleX(0.8794);transform-origin:0 0;">ALGODÃO KG</div>
<svg style="position:absolute;left:906.6999999999999px;top:510.0999999999999px" width="15.400000000000091" height="13.0" viewBox="1 2 22 19" preserveAspectRatio="none"><path fill="#ef8a1e" d="M12,2L1,21H23M12,6L19.530,19H4.470M11,10V14H13V10M11,16V18H13V16"/></svg>
<div class="t" style="left:962.20px;top:510.29px;font-size:12.5px;line-height:14.363px;color:#212121;transform:scaleX(0.9225);transform-origin:0 0;">-173,00 kg</div>
<div class="t" style="left:1158.00px;top:510.29px;font-size:12.5px;line-height:14.363px;color:#212121;transform:scaleX(0.9119);transform-origin:0 0;">0,00</div>
<svg style="position:absolute;left:1193.3px;top:505.2px;" width="20.2" height="20.2" viewBox="0 0 24 24"><path fill="#5c5c5c" d="M12 8c1.100 0 2-.9 2-2s-.9-2-2-2-2 .9-2 2 .9 2 2 2zm0 2c-1.100 0-2 .9-2 2s.9 2 2 2 2-.9 2-2-.9-2-2-2zm0 6c-1.100 0-2 .9-2 2s.9 2 2 2 2-.9 2-2-.9-2-2-2z"/></svg>
<svg style="position:absolute;left:609.3px;top:501.29999999999995px" width="8.700000000000045" height="9.0" viewBox="4 3 16 18" preserveAspectRatio="none"><path fill="#616161" d="M12,3C7.580,3 4,4.790 4,7C4,9.210 7.580,11 12,11C16.420,11 20,9.210 20,7C20,4.790 16.420,3 12,3M4,9V12C4,14.210 7.580,16 12,16C16.420,16 20,14.210 20,12V9C20,11.210 16.420,13 12,13C7.580,13 4,11.210 4,9M4,14V17C4,19.210 7.580,21 12,21C16.420,21 20,19.210 20,17V14C20,16.210 16.420,18 12,18C7.580,18 4,16.210 4,14Z"/></svg>
<div class="t" style="left:619.10px;top:499.39px;font-size:12.5px;line-height:14.363px;color:#212121;transform:scaleX(0.9542);transform-origin:0 0;">Armazem Dois/Cesar,</div>
<svg style="position:absolute;left:609.3px;top:521.0px" width="8.700000000000045" height="9.0" viewBox="4 3 16 18" preserveAspectRatio="none"><path fill="#616161" d="M12,3C7.580,3 4,4.790 4,7C4,9.210 7.580,11 12,11C16.420,11 20,9.210 20,7C20,4.790 16.420,3 12,3M4,9V12C4,14.210 7.580,16 12,16C16.420,16 20,14.210 20,12V9C20,11.210 16.420,13 12,13C7.580,13 4,11.210 4,9M4,14V17C4,19.210 7.580,21 12,21C16.420,21 20,19.210 20,17V14C20,16.210 16.420,18 12,18C7.580,18 4,16.210 4,14Z"/></svg>
<div class="t" style="left:619.10px;top:519.09px;font-size:12.5px;line-height:14.363px;color:#212121;transform:scaleX(0.9335);transform-origin:0 0;">Estoque Fazenda Aegro</div>
<div class="t" style="left:403.20px;top:555.75px;font-size:12px;line-height:13.788px;color:#212121;font-weight:700;transform:scaleX(0.8900);transform-origin:0 0;">ALGODÃO SC</div>
<svg style="position:absolute;left:906.6999999999999px;top:555.0999999999999px" width="15.400000000000091" height="13.0" viewBox="1 2 22 19" preserveAspectRatio="none"><path fill="#ef8a1e" d="M12,2L1,21H23M12,6L19.530,19H4.470M11,10V14H13V10M11,16V18H13V16"/></svg>
<div class="t" style="left:952.40px;top:555.29px;font-size:12.5px;line-height:14.363px;color:#212121;transform:scaleX(0.9346);transform-origin:0 0;">-1.325,00 sc</div>
<div class="t" style="left:1158.00px;top:555.29px;font-size:12.5px;line-height:14.363px;color:#212121;transform:scaleX(0.9119);transform-origin:0 0;">0,00</div>
<svg style="position:absolute;left:1193.3px;top:549.5px;" width="20.2" height="20.2" viewBox="0 0 24 24"><path fill="#5c5c5c" d="M12 8c1.100 0 2-.9 2-2s-.9-2-2-2-2 .9-2 2 .9 2 2 2zm0 2c-1.100 0-2 .9-2 2s.9 2 2 2 2-.9 2-2-.9-2-2-2zm0 6c-1.100 0-2 .9-2 2s.9 2 2 2 2-.9 2-2-.9-2-2-2z"/></svg>
<svg style="position:absolute;left:609.3px;top:556.1px" width="8.700000000000045" height="9.0" viewBox="4 3 16 18" preserveAspectRatio="none"><path fill="#616161" d="M12,3C7.580,3 4,4.790 4,7C4,9.210 7.580,11 12,11C16.420,11 20,9.210 20,7C20,4.790 16.420,3 12,3M4,9V12C4,14.210 7.580,16 12,16C16.420,16 20,14.210 20,12V9C20,11.210 16.420,13 12,13C7.580,13 4,11.210 4,9M4,14V17C4,19.210 7.580,21 12,21C16.420,21 20,19.210 20,17V14C20,16.210 16.420,18 12,18C7.580,18 4,16.210 4,14Z"/></svg>
<div class="t" style="left:619.10px;top:554.19px;font-size:12.5px;line-height:14.363px;color:#212121;transform:scaleX(0.9335);transform-origin:0 0;">Estoque Fazenda Aegro</div>
<div class="t" style="left:403.20px;top:605.65px;font-size:12px;line-height:13.788px;color:#212121;font-weight:700;transform:scaleX(0.9051);transform-origin:0 0;">ALGODÃO SC60</div>
<svg style="position:absolute;left:495.1px;top:607.4000000000001px" width="10.899999999999977" height="9.599999999999909" viewBox="0 0 22 18" preserveAspectRatio="none"><path fill="#ef7d22" transform="translate(-4,-3)" d="M12,3C7.580,3 4,4.790 4,7C4,9.210 7.580,11 12,11C16.420,11 20,9.210 20,7C20,4.790 16.420,3 12,3M4,9V12C4,14.210 7.580,16 12,16C16.420,16 20,14.210 20,12V9C20,11.210 16.420,13 12,13C7.580,13 4,11.210 4,9M4,14V17C4,19.210 7.580,21 12,21C16.420,21 20,19.210 20,17V14C20,16.210 16.420,18 12,18C7.580,18 4,16.210 4,14Z"/><path fill="#ef7d22" d="M19.300 3.500h2.200v7h-2.200zM19.300 12.300h2.200v2.200h-2.200z"/></svg>
<svg style="position:absolute;left:906.6999999999999px;top:605.0px" width="15.400000000000091" height="13.0" viewBox="1 2 22 19" preserveAspectRatio="none"><path fill="#ef8a1e" d="M12,2L1,21H23M12,6L19.530,19H4.470M11,10V14H13V10M11,16V18H13V16"/></svg>
<div class="t" style="left:943.60px;top:605.19px;font-size:12.5px;line-height:14.363px;color:#212121;transform:scaleX(0.9391);transform-origin:0 0;">37,00 sc 60kg</div>
<div class="t" style="left:1144.70px;top:605.19px;font-size:12.5px;line-height:14.363px;color:#212121;transform:scaleX(0.9285);transform-origin:0 0;">300,00</div>
<svg style="position:absolute;left:1193.3px;top:599.4px;" width="20.2" height="20.2" viewBox="0 0 24 24"><path fill="#5c5c5c" d="M12 8c1.100 0 2-.9 2-2s-.9-2-2-2-2 .9-2 2 .9 2 2 2zm0 2c-1.100 0-2 .9-2 2s.9 2 2 2 2-.9 2-2-.9-2-2-2zm0 6c-1.100 0-2 .9-2 2s.9 2 2 2 2-.9 2-2-.9-2-2-2z"/></svg>
<svg style="position:absolute;left:609.3px;top:595.8px" width="8.700000000000045" height="9.0" viewBox="4 3 16 18" preserveAspectRatio="none"><path fill="#616161" d="M12,3C7.580,3 4,4.790 4,7C4,9.210 7.580,11 12,11C16.420,11 20,9.210 20,7C20,4.790 16.420,3 12,3M4,9V12C4,14.210 7.580,16 12,16C16.420,16 20,14.210 20,12V9C20,11.210 16.420,13 12,13C7.580,13 4,11.210 4,9M4,14V17C4,19.210 7.580,21 12,21C16.420,21 20,19.210 20,17V14C20,16.210 16.420,18 12,18C7.580,18 4,16.210 4,14Z"/></svg>
<div class="t" style="left:619.10px;top:593.89px;font-size:12.5px;line-height:14.363px;color:#212121;transform:scaleX(0.9302);transform-origin:0 0;">Estoque Fazenda Aegro,</div>
<div class="t" style="left:607.80px;top:613.99px;font-size:12.5px;line-height:14.363px;color:#212121;transform:scaleX(0.8876);transform-origin:0 0;">COPLACANA - PIRACICABA</div>
<div class="t" style="left:403.20px;top:650.85px;font-size:12px;line-height:13.788px;color:#212121;font-weight:700;transform:scaleX(0.8974);transform-origin:0 0;">ALGODÃO UNIDADE</div>
<div class="t" style="left:965.40px;top:650.39px;font-size:12.5px;line-height:14.363px;color:#212121;transform:scaleX(0.9225);transform-origin:0 0;">100,00 un</div>
<div class="t" style="left:1135.20px;top:650.39px;font-size:12.5px;line-height:14.363px;color:#212121;transform:scaleX(0.9246);transform-origin:0 0;">1.000,00</div>
<svg style="position:absolute;left:1193.3px;top:644.4px;" width="20.2" height="20.2" viewBox="0 0 24 24"><path fill="#5c5c5c" d="M12 8c1.100 0 2-.9 2-2s-.9-2-2-2-2 .9-2 2 .9 2 2 2zm0 2c-1.100 0-2 .9-2 2s.9 2 2 2 2-.9 2-2-.9-2-2-2zm0 6c-1.100 0-2 .9-2 2s.9 2 2 2 2-.9 2-2-.9-2-2-2z"/></svg>
<div class="t" style="left:607.80px;top:649.09px;font-size:12.5px;line-height:14.363px;color:#212121;transform:scaleX(0.8994);transform-origin:0 0;">Gio AEGRO Teste</div>
<svg style="position:absolute;left:404px;top:705px" width="17" height="15" viewBox="0 0 17 15"><g fill="#6e6e6e"><ellipse cx="4.9" cy="3.4" rx="2.200" ry="0.800" transform="rotate(-70 4.9 3.4)"/><ellipse cx="8.5" cy="2.8" rx="2.200" ry="0.800" transform="rotate(-88 8.5 2.8)"/><ellipse cx="13.0" cy="4.7" rx="2.200" ry="0.800" transform="rotate(25 13.0 4.7)"/><ellipse cx="2.4" cy="8.4" rx="2.200" ry="0.800" transform="rotate(70 2.4 8.4)"/><ellipse cx="6.2" cy="7.2" rx="2.200" ry="0.800" transform="rotate(-75 6.2 7.2)"/><ellipse cx="10.2" cy="8.1" rx="2.200" ry="0.800" transform="rotate(-25 10.2 8.1)"/><ellipse cx="14.6" cy="9.4" rx="2.200" ry="0.800" transform="rotate(82 14.6 9.4)"/><ellipse cx="6.2" cy="12.5" rx="2.200" ry="0.800" transform="rotate(-15 6.2 12.5)"/><ellipse cx="11.0" cy="11.6" rx="2.200" ry="0.800" transform="rotate(-65 11.0 11.6)"/></g></svg>
<div class="t" style="left:427.30px;top:707.67px;font-size:11px;line-height:12.639px;color:#757575;transform:scaleX(0.9284);transform-origin:0 0;">Arroz</div>
<div style="position:absolute;left:458px;top:714px;width:751px;height:1px;background:#e0e0e0;"></div>
<div class="t" style="left:403.20px;top:753.85px;font-size:12px;line-height:13.788px;color:#212121;font-weight:700;transform:scaleX(0.9532);transform-origin:0 0;">113 TIO TAKA</div>
<svg style="position:absolute;left:906.6999999999999px;top:753.1999999999999px" width="15.400000000000091" height="13.0" viewBox="1 2 22 19" preserveAspectRatio="none"><path fill="#ef8a1e" d="M12,2L1,21H23M12,6L19.530,19H4.470M11,10V14H13V10M11,16V18H13V16"/></svg>
<div class="t" style="left:949.50px;top:753.39px;font-size:12.5px;line-height:14.363px;color:#212121;transform:scaleX(0.9295);transform-origin:0 0;">36.054,33 kg</div>
<div class="t" style="left:1111.30px;top:753.39px;font-size:12.5px;line-height:14.363px;color:#212121;transform:scaleX(0.9438);transform-origin:0 0;">4.487.317,95</div>
<svg style="position:absolute;left:1193.3px;top:747.7px;" width="20.2" height="20.2" viewBox="0 0 24 24"><path fill="#5c5c5c" d="M12 8c1.100 0 2-.9 2-2s-.9-2-2-2-2 .9-2 2 .9 2 2 2zm0 2c-1.100 0-2 .9-2 2s.9 2 2 2 2-.9 2-2-.9-2-2-2zm0 6c-1.100 0-2 .9-2 2s.9 2 2 2 2-.9 2-2-.9-2-2-2z"/></svg>
<svg style="position:absolute;left:609.3px;top:738.3px" width="8.700000000000045" height="9.0" viewBox="4 3 16 18" preserveAspectRatio="none"><path fill="#616161" d="M12,3C7.580,3 4,4.790 4,7C4,9.210 7.580,11 12,11C16.420,11 20,9.210 20,7C20,4.790 16.420,3 12,3M4,9V12C4,14.210 7.580,16 12,16C16.420,16 20,14.210 20,12V9C20,11.210 16.420,13 12,13C7.580,13 4,11.210 4,9M4,14V17C4,19.210 7.580,21 12,21C16.420,21 20,19.210 20,17V14C20,16.210 16.420,18 12,18C7.580,18 4,16.210 4,14Z"/></svg>
<div class="t" style="left:619.10px;top:736.39px;font-size:12.5px;line-height:14.363px;color:#212121;transform:scaleX(0.9175);transform-origin:0 0;">Estoque da revenda X,</div>
<div class="t" style="left:607.80px;top:756.39px;font-size:12.5px;line-height:14.363px;color:#212121;transform:scaleX(0.8896);transform-origin:0 0;">Gio AEGRO Teste,</div>
<div class="t" style="left:611.00px;top:771.69px;font-size:12.5px;line-height:14.363px;color:#1aa260;transform:scaleX(0.9143);transform-origin:0 0;">+15</div>
<svg style="position:absolute;left:632.4px;top:775.0px" width="8.5" height="8.900000000000091" viewBox="4 3 16 18" preserveAspectRatio="none"><path fill="#0ab562" d="M12,3C7.580,3 4,4.790 4,7C4,9.210 7.580,11 12,11C16.420,11 20,9.210 20,7C20,4.790 16.420,3 12,3M4,9V12C4,14.210 7.580,16 12,16C16.420,16 20,14.210 20,12V9C20,11.210 16.420,13 12,13C7.580,13 4,11.210 4,9M4,14V17C4,19.210 7.580,21 12,21C16.420,21 20,19.210 20,17V14C20,16.210 16.420,18 12,18C7.580,18 4,16.210 4,14Z"/></svg>
<div class="t" style="left:403.20px;top:801.65px;font-size:12px;line-height:13.788px;color:#212121;font-weight:700;transform:scaleX(0.9549);transform-origin:0 0;">114 ADOSAN</div>
<svg style="position:absolute;left:480.3px;top:803.4000000000001px" width="10.899999999999977" height="9.599999999999909" viewBox="0 0 22 18" preserveAspectRatio="none"><path fill="#ef7d22" transform="translate(-4,-3)" d="M12,3C7.580,3 4,4.790 4,7C4,9.210 7.580,11 12,11C16.420,11 20,9.210 20,7C20,4.790 16.420,3 12,3M4,9V12C4,14.210 7.580,16 12,16C16.420,16 20,14.210 20,12V9C20,11.210 16.420,13 12,13C7.580,13 4,11.210 4,9M4,14V17C4,19.210 7.580,21 12,21C16.420,21 20,19.210 20,17V14C20,16.210 16.420,18 12,18C7.580,18 4,16.210 4,14Z"/><path fill="#ef7d22" d="M19.300 3.500h2.200v7h-2.200zM19.300 12.300h2.200v2.200h-2.200z"/></svg>
<div class="t" style="left:955.90px;top:801.19px;font-size:12.5px;line-height:14.363px;color:#212121;transform:scaleX(0.9305);transform-origin:0 0;">1.636,77 kg</div>
<div class="t" style="left:1121.80px;top:801.19px;font-size:12.5px;line-height:14.363px;color:#212121;transform:scaleX(0.9335);transform-origin:0 0;">131.717,32</div>
<svg style="position:absolute;left:1193.3px;top:795.5px;" width="20.2" height="20.2" viewBox="0 0 24 24"><path fill="#5c5c5c" d="M12 8c1.100 0 2-.9 2-2s-.9-2-2-2-2 .9-2 2 .9 2 2 2zm0 2c-1.100 0-2 .9-2 2s.9 2 2 2 2-.9 2-2-.9-2-2-2zm0 6c-1.100 0-2 .9-2 2s.9 2 2 2 2-.9 2-2-.9-2-2-2z"/></svg>
<svg style="position:absolute;left:609.3px;top:786.3px" width="8.700000000000045" height="9.0" viewBox="4 3 16 18" preserveAspectRatio="none"><path fill="#616161" d="M12,3C7.580,3 4,4.790 4,7C4,9.210 7.580,11 12,11C16.420,11 20,9.210 20,7C20,4.790 16.420,3 12,3M4,9V12C4,14.210 7.580,16 12,16C16.420,16 20,14.210 20,12V9C20,11.210 16.420,13 12,13C7.580,13 4,11.210 4,9M4,14V17C4,19.210 7.580,21 12,21C16.420,21 20,19.210 20,17V14C20,16.210 16.420,18 12,18C7.580,18 4,16.210 4,14Z"/></svg>
<div class="t" style="left:619.80px;top:784.39px;font-size:12.5px;line-height:14.363px;color:#9e9e9e;font-style:italic;transform:scaleX(0.9233);transform-origin:0 0;">Estoque comercialização (excluído)</div>
<div class="t" style="left:801.70px;top:784.39px;font-size:12.5px;line-height:14.363px;color:#212121;">,</div>
<svg style="position:absolute;left:609.3px;top:805.6999999999999px" width="8.700000000000045" height="9.0" viewBox="4 3 16 18" preserveAspectRatio="none"><path fill="#616161" d="M12,3C7.580,3 4,4.790 4,7C4,9.210 7.580,11 12,11C16.420,11 20,9.210 20,7C20,4.790 16.420,3 12,3M4,9V12C4,14.210 7.580,16 12,16C16.420,16 20,14.210 20,12V9C20,11.210 16.420,13 12,13C7.580,13 4,11.210 4,9M4,14V17C4,19.210 7.580,21 12,21C16.420,21 20,19.210 20,17V14C20,16.210 16.420,18 12,18C7.580,18 4,16.210 4,14Z"/></svg>
<div class="t" style="left:619.80px;top:803.79px;font-size:12.5px;line-height:14.363px;color:#9e9e9e;font-style:italic;transform:scaleX(0.9030);transform-origin:0 0;">Dandara (excluído)</div>
<div class="t" style="left:715.50px;top:803.79px;font-size:12.5px;line-height:14.363px;color:#212121;">,</div>
<div class="t" style="left:611.00px;top:818.79px;font-size:12.5px;line-height:14.363px;color:#1aa260;transform:scaleX(0.8903);transform-origin:0 0;">+2</div>
<svg style="position:absolute;left:625.7px;top:822.0999999999999px" width="8.5" height="8.900000000000091" viewBox="4 3 16 18" preserveAspectRatio="none"><path fill="#0ab562" d="M12,3C7.580,3 4,4.790 4,7C4,9.210 7.580,11 12,11C16.420,11 20,9.210 20,7C20,4.790 16.420,3 12,3M4,9V12C4,14.210 7.580,16 12,16C16.420,16 20,14.210 20,12V9C20,11.210 16.420,13 12,13C7.580,13 4,11.210 4,9M4,14V17C4,19.210 7.580,21 12,21C16.420,21 20,19.210 20,17V14C20,16.210 16.420,18 12,18C7.580,18 4,16.210 4,14Z"/></svg>
<div class="t" style="left:403.20px;top:849.05px;font-size:12px;line-height:13.788px;color:#212121;font-weight:700;transform:scaleX(0.9113);transform-origin:0 0;">ADOSAN</div>
<svg style="position:absolute;left:456.8px;top:850.8000000000001px" width="10.899999999999977" height="9.599999999999909" viewBox="0 0 22 18" preserveAspectRatio="none"><path fill="#ef7d22" transform="translate(-4,-3)" d="M12,3C7.580,3 4,4.790 4,7C4,9.210 7.580,11 12,11C16.420,11 20,9.210 20,7C20,4.790 16.420,3 12,3M4,9V12C4,14.210 7.580,16 12,16C16.420,16 20,14.210 20,12V9C20,11.210 16.420,13 12,13C7.580,13 4,11.210 4,9M4,14V17C4,19.210 7.580,21 12,21C16.420,21 20,19.210 20,17V14C20,16.210 16.420,18 12,18C7.580,18 4,16.210 4,14Z"/><path fill="#ef7d22" d="M19.300 3.500h2.200v7h-2.200zM19.300 12.300h2.200v2.200h-2.200z"/></svg>
<svg style="position:absolute;left:906.6999999999999px;top:848.4px" width="15.400000000000091" height="13.0" viewBox="1 2 22 19" preserveAspectRatio="none"><path fill="#ef8a1e" d="M12,2L1,21H23M12,6L19.530,19H4.470M11,10V14H13V10M11,16V18H13V16"/></svg>
<div class="t" style="left:942.50px;top:848.59px;font-size:12.5px;line-height:14.363px;color:#212121;transform:scaleX(0.9363);transform-origin:0 0;">109.913,35 kg</div>
<div class="t" style="left:1128.20px;top:848.59px;font-size:12.5px;line-height:14.363px;color:#212121;transform:scaleX(0.9351);transform-origin:0 0;">99.921,22</div>
<svg style="position:absolute;left:1193.3px;top:842.3px;" width="20.2" height="20.2" viewBox="0 0 24 24"><path fill="#5c5c5c" d="M12 8c1.100 0 2-.9 2-2s-.9-2-2-2-2 .9-2 2 .9 2 2 2zm0 2c-1.100 0-2 .9-2 2s.9 2 2 2 2-.9 2-2-.9-2-2-2zm0 6c-1.100 0-2 .9-2 2s.9 2 2 2 2-.9 2-2-.9-2-2-2z"/></svg>
<svg style="position:absolute;left:609.3px;top:833.1px" width="8.700000000000045" height="9.0" viewBox="4 3 16 18" preserveAspectRatio="none"><path fill="#616161" d="M12,3C7.580,3 4,4.790 4,7C4,9.210 7.580,11 12,11C16.420,11 20,9.210 20,7C20,4.790 16.420,3 12,3M4,9V12C4,14.210 7.580,16 12,16C16.420,16 20,14.210 20,12V9C20,11.210 16.420,13 12,13C7.580,13 4,11.210 4,9M4,14V17C4,19.210 7.580,21 12,21C16.420,21 20,19.210 20,17V14C20,16.210 16.420,18 12,18C7.580,18 4,16.210 4,14Z"/></svg>
<div class="t" style="left:619.10px;top:831.19px;font-size:12.5px;line-height:14.363px;color:#212121;transform:scaleX(0.9302);transform-origin:0 0;">Estoque Fazenda Aegro,</div>
<svg style="position:absolute;left:609.3px;top:852.8px" width="8.700000000000045" height="9.0" viewBox="4 3 16 18" preserveAspectRatio="none"><path fill="#616161" d="M12,3C7.580,3 4,4.790 4,7C4,9.210 7.580,11 12,11C16.420,11 20,9.210 20,7C20,4.790 16.420,3 12,3M4,9V12C4,14.210 7.580,16 12,16C16.420,16 20,14.210 20,12V9C20,11.210 16.420,13 12,13C7.580,13 4,11.210 4,9M4,14V17C4,19.210 7.580,21 12,21C16.420,21 20,19.210 20,17V14C20,16.210 16.420,18 12,18C7.580,18 4,16.210 4,14Z"/></svg>
<div class="t" style="left:619.10px;top:850.89px;font-size:12.5px;line-height:14.363px;color:#212121;transform:scaleX(0.9347);transform-origin:0 0;">Estoque de Combustíveis,</div>
<div class="t" style="left:611.00px;top:867.79px;font-size:12.5px;line-height:14.363px;color:#1aa260;transform:scaleX(0.8903);transform-origin:0 0;">+8</div>
<svg style="position:absolute;left:625.7px;top:871.0999999999999px" width="8.5" height="8.900000000000091" viewBox="4 3 16 18" preserveAspectRatio="none"><path fill="#0ab562" d="M12,3C7.580,3 4,4.790 4,7C4,9.210 7.580,11 12,11C16.420,11 20,9.210 20,7C20,4.790 16.420,3 12,3M4,9V12C4,14.210 7.580,16 12,16C16.420,16 20,14.210 20,12V9C20,11.210 16.420,13 12,13C7.580,13 4,11.210 4,9M4,14V17C4,19.210 7.580,21 12,21C16.420,21 20,19.210 20,17V14C20,16.210 16.420,18 12,18C7.580,18 4,16.210 4,14Z"/></svg>
<div style="position:absolute;left:1214.0px;top:805.9px;width:47px;height:47px;background:#448aff;border-radius:50%;box-shadow:0 2px 4px rgba(0,0,0,.28),0 1px 2px rgba(0,0,0,.16);"></div>
<svg style="position:absolute;left:1228px;top:821px" width="19" height="15" viewBox="0 0 19 15"><g fill="none" stroke="#fff" stroke-width="1.300" stroke-linejoin="round"><path d="M12.400 1.700l4.800 2.700v5.600l-4.800 2.800-4.800-2.800V4.400zM7.600 4.400l4.800 2.800 4.800-2.800M12.400 7.200v5.600"/><path d="M1 4.400h4.800M2.400 7.200h3.400M3.800 10.200h2" stroke-width="1.200"/></g></svg>
<div style="position:absolute;left:1266px;top:124px;width:14px;height:748px;background:#fafafa;"></div>
<svg style="position:absolute;left:1268.800px;top:132px" width="13" height="7" viewBox="0 0 13 7"><path fill="#8a8a8a" d="M0 7L6.500 0 13 7z"/></svg>
<div style="position:absolute;left:1270px;top:147px;width:11px;height:561.6px;background:#8a8a8a;border-radius:5.500px;"></div>
<svg style="position:absolute;left:1268.800px;top:860px" width="13" height="7" viewBox="0 0 13 7"><path fill="#8a8a8a" d="M0 0L6.500 7 13 0z"/></svg>
</body></html>
